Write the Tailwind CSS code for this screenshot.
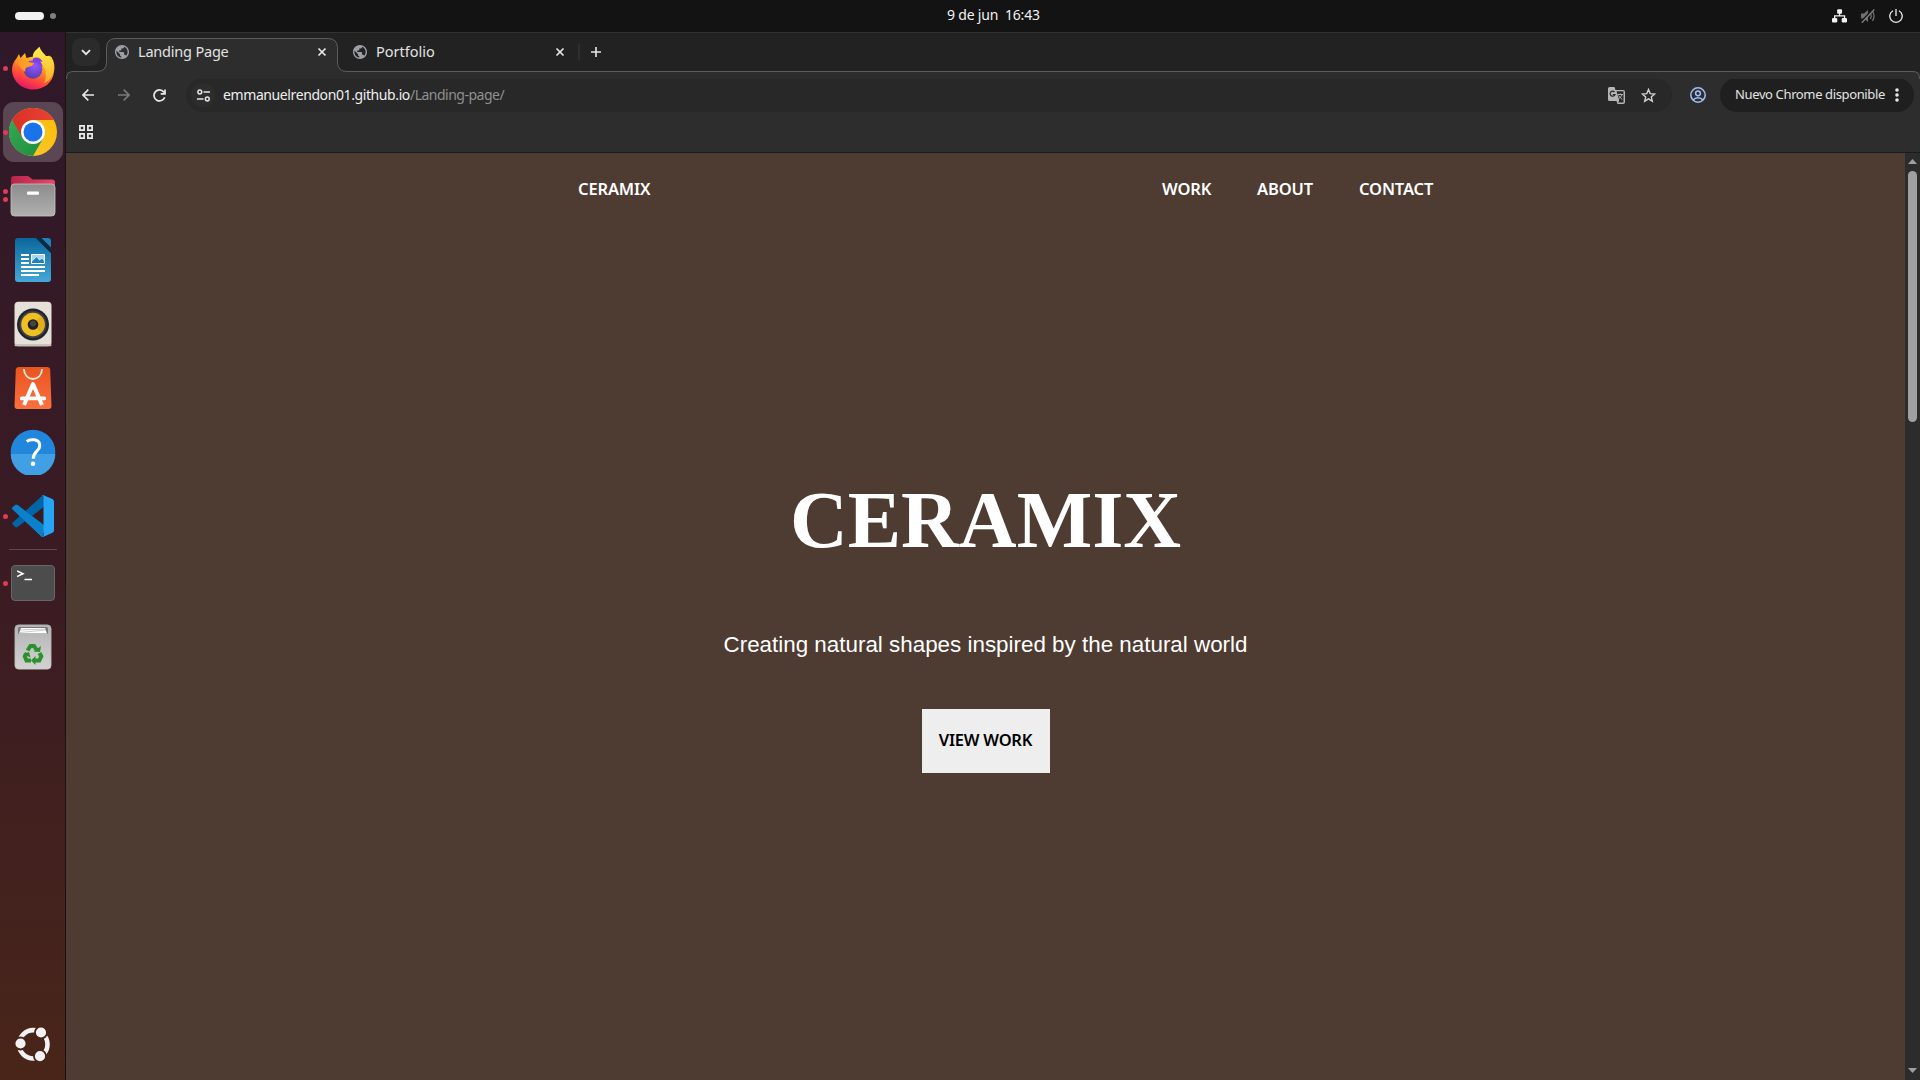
<!DOCTYPE html>
<html lang="es">
<head>
<meta charset="utf-8">
<title>Landing Page</title>
<script src="https://cdn.jsdelivr.net/npm/@tailwindcss/browser@4"></script>
</head>
<body class="h-screen w-screen overflow-hidden bg-[#131313] font-['Noto_Sans',sans-serif] flex flex-col">

<!-- System bar -->
<header class="h-8 shrink-0 grid grid-cols-3 items-center bg-[#131313] text-[#f2f2f2]">
  <div class="flex items-center gap-1.5 pl-[15px]">
    <span class="h-2 w-[29px] rounded-full bg-[#f2f2f2]"></span>
    <span class="size-1.5 rounded-full bg-[#808080]"></span>
  </div>
  <div class="flex justify-start pl-[307px] pb-[2px] text-[14px] leading-5"><span class="whitespace-pre tracking-[-0.2px]">9 de jun  16:43</span></div>
  <div class="flex items-center justify-end gap-[13px] pr-[17px]">
    <svg class="h-[14px] w-[15px]" viewBox="0 0 15.400 14" fill="#f2f2f2"><rect x="5.300" y="0" width="5" height="4.600" rx="1"/><rect x="0" y="9" width="5.400" height="4.600" rx="1.200"/><rect x="10" y="9" width="5.400" height="4.600" rx="1.200"/><path d="M7.800 4v3.200M2.700 9.500V6.800h10.200V9.500" fill="none" stroke="#f2f2f2" stroke-width="1.300"/></svg>
    <svg class="size-4" viewBox="0 0 16 16"><path d="M1 5.500h3L8 2v12L4 10.500H1z" fill="#707070"/><path d="M10.300 5c1 1.800 1 4.200 0 6M12.500 3.200c1.800 2.800 1.800 6.800 0 9.600" fill="none" stroke="#707070" stroke-width="1.300"/><path d="M1.200 14 13 1.500" stroke="#131313" stroke-width="2"/><path d="M1.800 14.800 14.300 1.500" stroke="#808080" stroke-width="1.300"/></svg>
    <svg class="size-[14px]" viewBox="0 0 14 14" fill="none" stroke="#f2f2f2" stroke-width="1.300"><path d="M4 1.700a6.200 6.200 0 1 0 6 0M7 0v7"/></svg>
  </div>
</header>

<div class="flex min-h-0 flex-1">
  <!-- Dock -->
  <aside class="w-[66px] shrink-0 flex flex-col border-r border-[#1c1115] bg-linear-to-b from-[#2f1829] via-[#3a1b23] to-[#492519] pt-1">
    <div class="relative h-16 flex items-center justify-center">
      <i class="absolute left-[3px] size-[5px] rounded-full bg-[#e03a56]"></i>
      <svg class="size-11" viewBox="0 0 44 44">
        <defs><linearGradient id="ff1" x1=".8" y1="0" x2=".3" y2="1"><stop offset="0" stop-color="#ffe226"/><stop offset=".4" stop-color="#ff9a22"/><stop offset=".7" stop-color="#ff4a3a"/><stop offset="1" stop-color="#e5106e"/></linearGradient><radialGradient id="ff2" cx=".6" cy=".3" r=".8"><stop offset="0" stop-color="#9a55ff"/><stop offset="1" stop-color="#4a3ba8"/></radialGradient><linearGradient id="ff3" x1="0" y1="0" x2="0" y2="1"><stop offset="0" stop-color="#fff04f"/><stop offset="1" stop-color="#ffae25"/></linearGradient></defs>
        <path d="M5 13C6 12 7 9.500 8 8l1.500 4L14 7l1.500 5c5-1.500 10-2 13 0 7-3 11-2 12-1 3 5 3.500 10 2.500 15C41.500 37 33 43.500 22 43.500 10 43.500 1 34 1 23.500 1 19 3 15.500 5 13z" fill="url(#ff1)"/>
        <path d="M28.500.800c1.500 4.500 4 6 7 9.700l3-1c-.5 1.500 0 3 1 4.500l1.800.5C45 26 40 35 33 37c4-8 1-17-4-21l-7-4c-1-5 3-8 6.500-11.200z" fill="url(#ff3)"/>
        <circle cx="22" cy="23.500" r="9.300" fill="url(#ff2)"/>
        <path d="M22 12.500c4-2 8-.5 9.500 3.500l-2.500-.5c2 2 2.500 4 2.500 5.500-3-4-6-5-9.500-5z" fill="#7e3fe8"/>
        <path d="M6.500 17c4-3.500 8-3 11-1l5.500 1c-.5 2.500-3 3.500-6 4-3 .5-3 3-2.500 5-3-2-6-5-8-9z" fill="#ff9d28"/>
      </svg>
    </div>
    <div class="relative h-16 flex items-center justify-center">
      <div class="ml-px size-[60px] rounded-[11px] bg-white/20 flex items-center justify-center">
        <svg class="size-12" viewBox="0 0 48 48">
          <defs><linearGradient id="cr" x1="0" x2="1"><stop offset="0" stop-color="#d93025"/><stop offset="1" stop-color="#ea4335"/></linearGradient><linearGradient id="cy" x1="1" y1="0" x2="0" y2="1"><stop offset="0" stop-color="#fbbc04"/><stop offset="1" stop-color="#fcc934"/></linearGradient><linearGradient id="cg" x1="0" y1="0" x2="1" y2="1"><stop offset="0" stop-color="#34a853"/><stop offset="1" stop-color="#1e8e3e"/></linearGradient></defs>
          <circle cx="24" cy="24" r="24" fill="url(#cy)"/>
          <path d="M3.200 12a24 24 0 0 0 20.800 36L34.400 30 24 24z" fill="url(#cg)"/>
          <path d="M3.200 12a24 24 0 0 1 41.600 0H24v12l-10.400 6z" fill="url(#cr)"/>
          <circle cx="24" cy="24" r="12" fill="#fff"/><circle cx="24" cy="24" r="9.500" fill="#1a73e8"/>
        </svg>
      </div>
      <i class="absolute left-[3px] size-[5px] rounded-full bg-[#e03a56]"></i>
    </div>
    <div class="relative h-16 flex items-center justify-center">
      <i class="absolute left-[3px] top-[25px] size-[5px] rounded-full bg-[#e03a56]"></i>
      <i class="absolute left-[3px] top-[33px] size-[5px] rounded-full bg-[#e03a56]"></i>
      <svg class="h-11 w-12" viewBox="0 0 48 44">
        <defs><linearGradient id="fo" x1="0" y1="0" x2="0" y2="1"><stop offset="0" stop-color="#8c8c8c"/><stop offset="1" stop-color="#b0b0b0"/></linearGradient><linearGradient id="fr" x1="0" x2="1"><stop offset="0" stop-color="#b52448"/><stop offset="1" stop-color="#e54a6b"/></linearGradient></defs>
        <path d="M2 5q0-3 3-3h13q1.500 0 2.500 1l3 2.500H43q3 0 3 3V20H2z" fill="url(#fr)"/>
        <rect x="2" y="10" width="44" height="32" rx="3.500" fill="url(#fo)" stroke="#c5c5c5" stroke-width=".8"/>
        <rect x="18" y="17.500" width="12" height="3.200" rx="1" fill="#fff"/>
      </svg>
    </div>
    <div class="h-16 flex items-center justify-center">
      <svg class="h-[46px] w-[38px]" viewBox="0 0 38 46">
        <defs><linearGradient id="wr" x1="0" y1="0" x2="0" y2="1"><stop offset="0" stop-color="#0a679c"/><stop offset="1" stop-color="#45a8d9"/></linearGradient></defs>
        <path d="M4 1h18l15 15v26q0 3-3 3H4q-3 0-3-3V4q0-3 3-3z" fill="url(#wr)"/><path d="M22 1h5l10 10v5z" fill="#062c43"/><path d="M27.500 1H34q3 0 3 3v6.500z" fill="#1d82b8"/>
        <g fill="#fff"><path d="M7 17h8v2H7zM7 21h8v2H7zM7 25h8v2H7zM7 29h24v2H7zM7 33h24v2H7zM7 37h18v2H7z"/><rect x="17" y="17" width="14" height="10" rx="1"/></g><path d="M18 18h12v5.500l-2-2.500-2.500 2-3-3.500-4.500 4.500z" fill="#a5d8f2"/><path d="M18 26v-1.500l4.500-4.500 3 3.500 2.500-2 2 2.500v2z" fill="#1d82b8"/>
      </svg>
    </div>
    <div class="h-16 flex items-center justify-center">
      <svg class="h-[46px] w-[38px]" viewBox="0 0 38 46"><rect x=".5" y=".8" width="37" height="44.500" rx="4" fill="#e5e0d8"/><rect x=".5" y="43" width="37" height="2.300" rx="1.200" fill="#c9c4bb"/><circle cx="19" cy="23.500" r="16" fill="#23232b"/><circle cx="19" cy="23.500" r="13.500" fill="#3f414c"/><circle cx="19" cy="23.500" r="11.800" fill="#f0bf22"/><path d="m19 23.500 8-8.600a11.800 11.800 0 0 1 0 17.200z" fill="#d9a515" opacity=".6"/><circle cx="19" cy="23.500" r="5.300" fill="#222"/><circle cx="19" cy="22.500" r="3" fill="#444"/></svg>
    </div>
    <div class="h-16 flex items-center justify-center">
      <svg class="h-[44px] w-[38px]" viewBox="0 0 38 44"><defs><linearGradient id="ap" x1="0" y1="0" x2="0" y2="1"><stop offset="0" stop-color="#e9541f"/><stop offset="1" stop-color="#fb7040"/></linearGradient></defs><path d="M4.500 1h29q2.500 0 2.700 2.500L37.500 40q0 3-3 3h-31q-3 0-3-3L1.800 3.500Q2 1 4.500 1z" fill="url(#ap)"/><path d="M10 3c0 6 4 10 9 10s9-4 9-10" fill="none" stroke="#fde9e0" stroke-width="1.800"/><path d="m10 39 9-21 9 21" fill="none" stroke="#fff" stroke-width="4" stroke-linejoin="round"/><rect x="6" y="30.500" width="26" height="3.800" rx="1.500" fill="#fff"/></svg>
    </div>
    <div class="h-16 flex items-center justify-center">
      <svg class="size-[46px]" viewBox="0 0 46 46"><circle cx="23" cy="23" r="22.300" fill="#2287dc"/><path d="M.7 25a22.300 22.300 0 0 0 44.600 0z" fill="#419fe3"/><path d="M16.800 12.500c3-2.500 12.700-3.200 13 3.700.2 6-6.600 6-6.600 13.500" fill="none" stroke="#fff" stroke-width="3"/><circle cx="23" cy="34.800" r="2.300" fill="#fff"/></svg>
    </div>
    <div class="relative h-16 flex items-center justify-center">
      <i class="absolute left-[3px] size-[5px] rounded-full bg-[#e03a56]"></i>
      <svg class="size-11" viewBox="0 0 44 44"><path d="M31 43 1.800 15.500q-1.200-1 0-2.200l2.500-2.200q1-.8 2.200 0L34 32z" fill="#0a8adb"/><path d="M32 1 1.800 28.500q-1.200 1 0 2.200l2.500 2.300q1 .8 2.200 0L34 12z" fill="#0065a9"/><path d="M1.800 15.500q-1.200-1 0-2.200l2.500-2.200q1-.8 2.200 0L34 32l-3 11z" fill="#0c80c8"/><path d="m32 1 9.500 4Q43 6 43 7.500v29q0 1.500-1.500 2.300L32 43q-1 .4-2-.6 2.500 1 2.500-1.400V3Q32.500.500 30 1.600q1-1 2-.6z" fill="#25a5f3"/></svg>
    </div>
    <div class="ml-[9px] mt-px mb-px h-px w-12 shrink-0 bg-[#5b4a4c]"></div>
    <div class="relative h-16 flex items-center justify-center">
      <i class="absolute left-[3px] size-[5px] rounded-full bg-[#e03a56]"></i>
      <div class="h-9 w-11 rounded-[4px] border border-[#666] bg-[#4c4c4c] flex items-start"><svg class="ml-[5px] mt-[3px] h-3 w-4" viewBox="0 0 16 12" fill="none" stroke="#fff" stroke-width="1.500"><path d="m0 2 6 2.700L0 7.500M7.500 10.500h7.500"/></svg></div>
    </div>
    <div class="h-16 flex items-center justify-center">
      <svg class="h-[46px] w-[38px]" viewBox="0 0 38 46"><defs><linearGradient id="tr" x1="0" y1="0" x2="0" y2="1"><stop offset="0" stop-color="#b4b4b4"/><stop offset="1" stop-color="#d2d2d2"/></linearGradient></defs><rect x=".8" y=".800" width="36.400" height="44.500" rx="4" fill="url(#tr)" stroke="#aaa" stroke-width=".5"/><rect x="4" y="3" width="30" height="7" rx="1.500" fill="#777"/><path d="M5 9.500 7 4h24l2 5.500z" fill="#fff"/><path d="m6 6 26-1M5.500 8.500 32 6" stroke="#aaa" stroke-width=".6"/>
      <g fill="none" stroke="#2c912c" stroke-width="4"><path d="m13.500 26.500 3-4.500h3.500l3 4.500"/><path d="m25.500 29 1.800 3.300-2 4.200H20"/><path d="M17 36.500h-4.500l-1.700-4 2-3.500"/></g><g fill="#2c912c"><path d="m19.500 27.500 6.500.5 1-6z"/><path d="m21.500 32-4.500 4.500 4.500 4.500z"/><path d="m9 30 6-2 1.500 5.500z"/></g></svg>
    </div>
    <div class="mt-auto flex h-[72px] items-center justify-center pl-px">
      <svg class="size-9" viewBox="0 0 36 36"><circle cx="18.300" cy="18.300" r="14.200" fill="none" stroke="#f2f2f2" stroke-width="4.600"/><g fill="#f2f2f2" stroke="#47241b" stroke-width="1.800"><circle cx="5.500" cy="17.500" r="6"/><circle cx="26" cy="6.500" r="6"/><circle cx="25" cy="30.200" r="6"/></g></svg>
    </div>
  </aside>

  <!-- Browser window -->
  <main class="min-w-0 flex-1 flex flex-col bg-[#2d2d2d]">
    <div class="relative h-10 shrink-0 border-t border-[#333] bg-[#222]">
      <svg class="absolute left-0 top-0 h-[46px] w-[1854px]" viewBox="0 33 1854 46"><path d="M0 79q0-7.500 7-7.500h24q9.500 0 9.500-9.500V48q0-9.500 9.500-9.500h212q9.500 0 9.500 9.500v14q0 9.500 9.500 9.500h1566q7 0 7 7.500z" fill="#2d2d2d"/><path d="M.5 79q0-7.500 6.500-7.500h24q9.500 0 9.500-9.500V48q0-9.500 9.500-9.500h212q9.500 0 9.500 9.500v14q0 9.500 9.500 9.500h1566q6.500 0 6.500 7.500" fill="none" stroke="#5c5c5c"/></svg>
      <div class="relative flex h-full items-center pl-1.5 pb-px text-[14.5px] tracking-[-0.2px] text-[#e3e3e3]">
        <div class="flex size-7 items-center justify-center rounded-[9px] bg-[#2b2b2b]"><svg class="size-3" viewBox="0 0 12 12" fill="none" stroke="#e8e8e8" stroke-width="1.900"><path d="m2 4.200 4 4 4-4"/></svg></div>
        <div class="ml-[6px] flex w-[232px] items-center pl-[9px] pr-[10px]">
          <svg class="size-[14px] shrink-0" viewBox="2 2 20 20" fill="#9aa0a6"><path d="M12 2C6.480 2 2 6.480 2 12s4.480 10 10 10 10-4.480 10-10S17.520 2 12 2zm-1 17.930c-3.950-.49-7-3.850-7-7.930 0-.62.080-1.210.210-1.790L9 15v1c0 1.100.9 2 2 2v1.930zm6.900-2.540c-.26-.81-1-1.390-1.900-1.390h-1v-3c0-.55-.45-1-1-1H8v-2h2c.55 0 1-.45 1-1V7h2c1.100 0 2-.9 2-2v-.41c2.930 1.190 5 4.060 5 7.410 0 2.080-.8 3.970-2.100 5.390z"/></svg>
          <span class="ml-[9px] flex-1 whitespace-nowrap">Landing Page</span>
          <svg class="size-3" viewBox="0 0 12 12" stroke="#e8e8e8" stroke-width="1.700"><path d="m2.500 2.500 7 7m0-7-7 7"/></svg>
        </div>
        <div class="ml-[6px] flex w-[232px] items-center pl-[9px] pr-[10px]">
          <svg class="size-[14px] shrink-0" viewBox="2 2 20 20" fill="#9aa0a6"><path d="M12 2C6.480 2 2 6.480 2 12s4.480 10 10 10 10-4.480 10-10S17.520 2 12 2zm-1 17.930c-3.950-.49-7-3.850-7-7.930 0-.62.080-1.210.210-1.790L9 15v1c0 1.100.9 2 2 2v1.930zm6.900-2.540c-.26-.81-1-1.390-1.900-1.390h-1v-3c0-.55-.45-1-1-1H8v-2h2c.55 0 1-.45 1-1V7h2c1.100 0 2-.9 2-2v-.41c2.930 1.190 5 4.060 5 7.410 0 2.080-.8 3.970-2.100 5.390z"/></svg>
          <span class="ml-[9px] flex-1 tracking-normal">Portfolio</span>
          <svg class="size-3" viewBox="0 0 12 12" stroke="#e8e8e8" stroke-width="1.700"><path d="m2.500 2.500 7 7m0-7-7 7"/></svg>
        </div>
        <span class="ml-[2px] h-4 w-[2px] bg-[#2e2e2e]"></span>
        <svg class="ml-[11px] size-[10px]" viewBox="0 0 10 10" stroke="#e8e8e8" stroke-width="1.600"><path d="M5 0v10M0 5h10"/></svg>
      </div>
    </div>

    <div class="flex h-[46px] shrink-0 items-center pl-4 pr-1.5">
      <svg class="size-[12px]" viewBox="0 0 12 12" fill="none" stroke="#e8e8e8" stroke-width="1.600"><path d="M12 6H1M6.300.600.900 6l5.400 5.400"/></svg>
      <svg class="ml-[24px] size-[12px]" viewBox="0 0 12 12" fill="none" stroke="#7a7a7a" stroke-width="1.600"><path d="M0 6h11M5.700.600 11.100 6l-5.400 5.400"/></svg>
      <svg class="ml-[23px] size-[13px]" viewBox="0 0 13 13" fill="none" stroke="#e8e8e8" stroke-width="1.700"><path d="M11.700 8.200a5.500 5.500 0 1 1-.9-5.200l1 1.200"/><path d="M12 .500v4.300H7.700"/></svg>
      <div class="ml-[20px] flex h-[34px] flex-1 items-center rounded-full bg-[#282828] pl-[5px] pr-[16px]">
        <span class="flex size-6 items-center justify-center rounded-full bg-[#2d2d2d]"><svg class="size-[13px]" viewBox="0 0 13 13" fill="none" stroke="#e3e3e3" stroke-width="1.500"><circle cx="2.800" cy="3" r="1.900"/><path d="M6.500 3H13M0 10h6.500"/><circle cx="10.300" cy="10" r="1.900"/></svg></span>
        <span class="ml-[8px] flex-1 whitespace-nowrap pb-[2px] text-[14px] text-[#8f8f8f]"><span class="tracking-[-0.4px] text-[#efefef]">emmanuelrendon01.github.io</span><span class="tracking-[-0.5px]">/Landing-page/</span></span>
        <svg class="size-[17px]" viewBox="0 0 17 17"><path d="M1.500 0h5l1 3H15q2 0 2 2v10q0 2-2 2H9.500l-1-3H1.500Q0 14 0 12.500v-11Q0 0 1.500 0z" fill="#b5b5b5"/><path d="M8.500 4.300h7v11.300h-5.300l1-2z" fill="#282828"/><path d="M6.500 5a2.500 2.500 0 1 0 .5 2.500H4.800" fill="none" stroke="#282828" stroke-width="1.200"/><path d="M9.500 7.500h5.500M12.200 6.500v1M14 7.500c-.5 2-2 3.500-3.500 4.500M10.500 8.500c.8 1.500 2.500 3 3.800 4" fill="none" stroke="#b5b5b5"/></svg>
        <svg class="ml-[16px] size-[15px]" viewBox="0 0 15 15" fill="none" stroke="#d0d0d0" stroke-width="1.400"><path d="m7.500 1.500 1.700 4.100 4.500.4-3.400 2.900 1 4.300-3.800-2.300-3.800 2.300 1-4.300L1.300 6l4.500-.4z"/></svg>
      </div>
      <svg class="ml-[18px] size-4" viewBox="0 0 16 16" fill="none" stroke="#a0c0f8" stroke-width="1.500"><circle cx="8" cy="8" r="7.200"/><circle cx="8" cy="6.300" r="2.400"/><path d="M3 13c2.500-3 7.500-3 10 0"/></svg>
      <div class="ml-[14px] flex h-[34px] w-[194px] items-center rounded-full bg-[#1f1f1f] pl-[15px] text-[13px] tracking-[-0.37px] text-[#e3e3e3]"><span class="w-[154px] whitespace-nowrap">Nuevo Chrome disponible</span><svg class="ml-[6px] h-[14px] w-1" viewBox="0 0 4 14" fill="#e8e8e8"><circle cx="2" cy="2" r="1.800"/><circle cx="2" cy="7" r="1.800"/><circle cx="2" cy="12" r="1.800"/></svg></div>
    </div>
    <div class="flex h-[35px] shrink-0 border-b border-[#1b1b1b] pl-[13px] pt-[7px]">
      <svg class="size-[14px]" viewBox="0 0 14 14" fill="none" stroke="#ececec" stroke-width="1.700"><path d="M.9.900h4.200v4.200H.9zM8.900.900h4.200v4.200H8.900zM.9 8.900h4.200v4.200H.9zM8.900 8.900h4.200v4.200H8.900z"/></svg>
    </div>

    <!-- Page -->
    <div class="flex min-h-0 flex-1">
      <section class="flex min-w-0 flex-1 flex-col bg-[#4e3b32] text-white">
        <nav class="flex h-[72px] items-center pl-[512px] text-[16.5px] font-semibold tracking-[-0.15px]">
          <span class="w-[584px]">CERAMIX</span><span class="w-[95px]">WORK</span><span class="w-[102px]">ABOUT</span><span>CONTACT</span>
        </nav>
        <div class="flex flex-col items-center pt-[249px]">
          <h1 class="font-['Liberation_Serif',serif] text-[80px] leading-[92px] font-bold">CERAMIX</h1>
          <p class="mt-[65px] font-['Liberation_Sans',sans-serif] text-[22.4px] leading-[28px]">Creating natural shapes inspired by the natural world</p>
          <button class="mt-[50px] h-16 w-32 bg-[#eee] pb-[2px] text-[16.5px] font-semibold tracking-[-0.25px] text-black whitespace-nowrap">VIEW WORK</button>
        </div>
      </section>
      <div class="flex w-[15px] shrink-0 flex-col items-center bg-[#2c2c2c] pt-1.5 pb-[7px]">
        <svg class="h-[5px] w-[9px]" viewBox="0 0 9 5" fill="#a0a0a0"><path d="M4.500 0 9 5H0z"/></svg>
        <span class="mt-[7px] h-[251px] w-[9px] rounded-full bg-[#a0a0a0]"></span>
        <svg class="mt-auto h-[5px] w-[9px]" viewBox="0 0 9 5" fill="#a0a0a0"><path d="M4.500 5 9 0H0z"/></svg>
      </div>
    </div>
  </main>
</div>
</body>
</html>
